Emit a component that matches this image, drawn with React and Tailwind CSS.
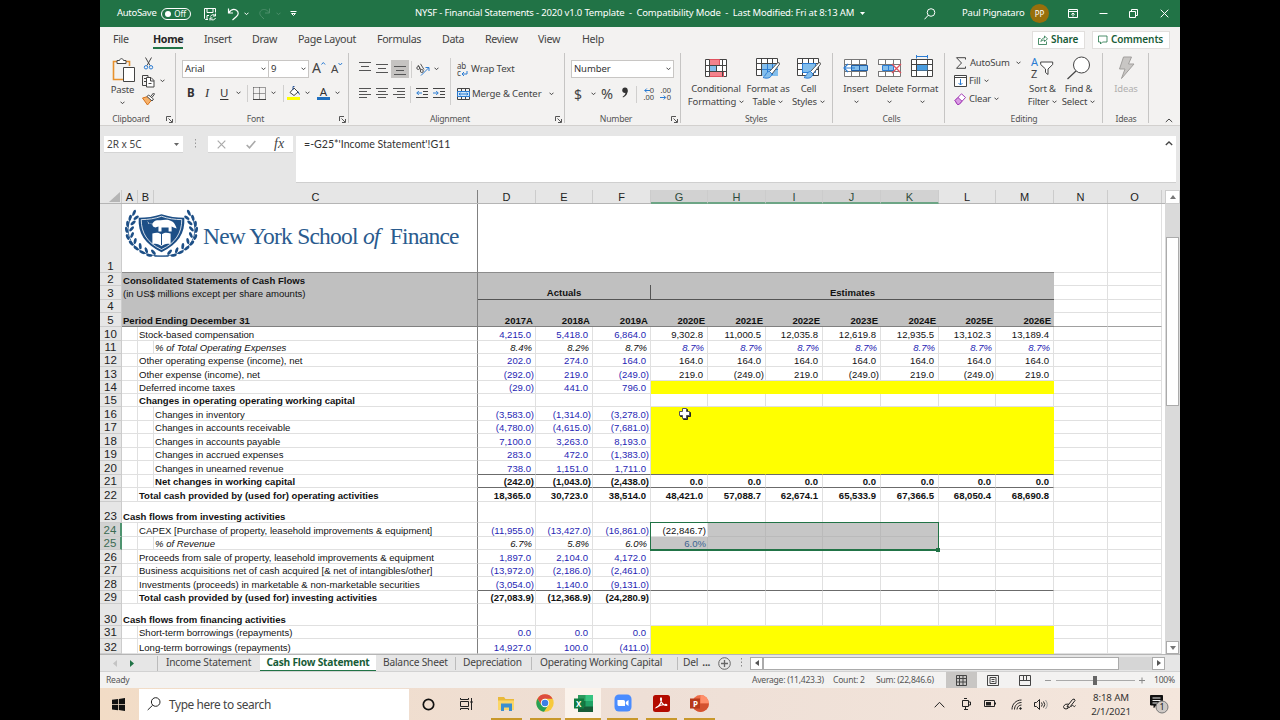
import { clsx } from "clsx";

// column widths, D to M
const yearCols = [
    { id: "D", w: "w-[58px]", year: "2017A" },
    { id: "E", w: "w-[57px]", year: "2018A" },
    { id: "F", w: "w-[58px]", year: "2019A" },
    { id: "G", w: "w-[57px]", year: "2020E" },
    { id: "H", w: "w-[58px]", year: "2021E" },
    { id: "I", w: "w-[57px]", year: "2022E" },
    { id: "J", w: "w-[58px]", year: "2023E" },
    { id: "K", w: "w-[58px]", year: "2024E" },
    { id: "L", w: "w-[57px]", year: "2025E" },
    { id: "M", w: "w-[58px]", year: "2026E" },
];

const rows = [
    { n: 10, h: "h-[14px]", indent: 1, label: "Stock-based compensation", hist: ["4,215.0", "5,418.0", "6,864.0"], est: ["9,302.8", "11,000.5", "12,035.8", "12,619.8", "12,935.5", "13,102.3", "13,189.4"] },
    { n: 11, h: "h-[13px]", indent: 2, label: "% of Total Operating Expenses", italic: true, hist: ["8.4%", "8.2%", "8.7%"], est: ["8.7%", "8.7%", "8.7%", "8.7%", "8.7%", "8.7%", "8.7%"] },
    { n: 12, h: "h-[13px]", indent: 1, label: "Other operating expense (income), net", hist: ["202.0", "274.0", "164.0"], est: ["164.0", "164.0", "164.0", "164.0", "164.0", "164.0", "164.0"] },
    { n: 13, h: "h-[14px]", indent: 1, label: "Other expense (income), net", hist: ["(292.0)", "219.0", "(249.0)"], est: ["219.0", "(249.0)", "219.0", "(249.0)", "219.0", "(249.0)", "219.0"] },
    { n: 14, h: "h-[13px]", indent: 1, label: "Deferred income taxes", hist: ["(29.0)", "441.0", "796.0"], yellow: true },
    { n: 15, h: "h-[13px]", indent: 1, label: "Changes in operating operating working capital", bold: true },
    { n: 16, h: "h-[14px]", indent: 2, label: "Changes in inventory", hist: ["(3,583.0)", "(1,314.0)", "(3,278.0)"], yellow: true },
    { n: 17, h: "h-[13px]", indent: 2, label: "Changes in accounts receivable", hist: ["(4,780.0)", "(4,615.0)", "(7,681.0)"], yellow: true },
    { n: 18, h: "h-[14px]", indent: 2, label: "Changes in accounts payable", hist: ["7,100.0", "3,263.0", "8,193.0"], yellow: true },
    { n: 19, h: "h-[13px]", indent: 2, label: "Changes in accrued expenses", hist: ["283.0", "472.0", "(1,383.0)"], yellow: true },
    { n: 20, h: "h-[14px]", indent: 2, label: "Changes in unearned revenue", hist: ["738.0", "1,151.0", "1,711.0"], yellow: true, line: true },
    { n: 21, h: "h-[13px]", indent: 2, label: "Net changes in working capital", bold: true, line: true, hist: ["(242.0)", "(1,043.0)", "(2,438.0)"], est: ["0.0", "0.0", "0.0", "0.0", "0.0", "0.0", "0.0"] },
    { n: 22, h: "h-[14px]", indent: 1, label: "Total cash provided by (used for) operating activities", bold: true, hist: ["18,365.0", "30,723.0", "38,514.0"], est: ["48,421.0", "57,088.7", "62,674.1", "65,533.9", "67,366.5", "68,050.4", "68,690.8"] },
    { n: 23, h: "h-[21px]", indent: 0, label: "Cash flows from investing activities", bold: true },
    { n: 24, h: "h-[14px]", indent: 1, label: "CAPEX [Purchase of property, leasehold improvements & equipment]", hist: ["(11,955.0)", "(13,427.0)", "(16,861.0)"], est: ["(22,846.7)"], selected: true },
    { n: 25, h: "h-[13px]", indent: 2, label: "% of Revenue", italic: true, hist: ["6.7%", "5.8%", "6.0%"], est: ["6.0%"], selected: true },
    { n: 26, h: "h-[14px]", indent: 1, label: "Proceeds from sale of property, leasehold improvements & equipment", hist: ["1,897.0", "2,104.0", "4,172.0"] },
    { n: 27, h: "h-[13px]", indent: 1, label: "Business acquisitions net of cash acquired [& net of intangibles/other]", hist: ["(13,972.0)", "(2,186.0)", "(2,461.0)"] },
    { n: 28, h: "h-[14px]", indent: 1, label: "Investments (proceeds) in marketable & non-marketable securities", hist: ["(3,054.0)", "1,140.0", "(9,131.0)"], line: true },
    { n: 29, h: "h-[13px]", indent: 1, label: "Total cash provided by (used for) investing activities", bold: true, hist: ["(27,083.9)", "(12,368.9)", "(24,280.9)"] },
    { n: 30, h: "h-[22px]", indent: 0, label: "Cash flows from financing activities", bold: true },
    { n: 31, h: "h-[13px]", indent: 1, label: "Short-term borrowings (repayments)", hist: ["0.0", "0.0", "0.0"], yellow: true },
    { n: 32, h: "h-[15px]", indent: 1, label: "Long-term borrowings (repayments)", hist: ["14,927.0", "100.0", "(411.0)"], yellow: true },
];

const tabs = [
    { name: "File", w: "w-[40px]" },
    { name: "Home", w: "w-[51px]" },
    { name: "Insert", w: "w-[48px]" },
    { name: "Draw", w: "w-[46px]" },
    { name: "Page Layout", w: "w-[79px]" },
    { name: "Formulas", w: "w-[65px]" },
    { name: "Data", w: "w-[43px]" },
    { name: "Review", w: "w-[53px]" },
    { name: "View", w: "w-[44px]" },
    { name: "Help", w: "w-[40px]" },
];

function Svg({ w, h, className, children, stroke = "#444" }) {
    return (
        <svg
            width={w}
            height={h}
            viewBox={`0 0 ${w} ${h}`}
            fill="none"
            stroke={stroke}
            strokeWidth="1"
            className={clsx("shrink-0", className)}
        >
            {children}
        </svg>
    );
}

function Chevron({ className, stroke = "#444" }) {
    return (
        <Svg w={5} h={4} className={className} stroke={stroke}>
            <path d="M.5 .7l2 2 2-2" />
        </Svg>
    );
}

function Divider({ className }) {
    return <div className={clsx("w-px shrink-0", className)} />;
}

function Lines({ rows, className }) {
    return (
        <Svg w={12} h={12} className={className} stroke="#555">
            {rows.map(([x1, x2, y]) => (
                <path key={y} d={`M${x1} ${y}H${x2}`} />
            ))}
        </Svg>
    );
}

/* ---------- title bar ---------- */

function TitleBar() {
    return (
        <div className="flex h-[27px] shrink-0 items-center bg-[#217346] text-[9.5px] whitespace-nowrap text-white">
            <div className="ml-[17px] w-[44px] tracking-[-0.3px]">AutoSave</div>
            <div className="flex h-[12px] w-[30px] items-center justify-between rounded-full border border-white pr-[4px] pl-[3px] text-[8px]">
                <span className="size-[6px] rounded-full bg-white" />
                <span>Off</span>
            </div>
            <Svg w={14} h={14} className="ml-[12px]" stroke="#fff">
                <path d="M5 12.5H2.500l-1-1v-10h11v4M4 1.500v4h6v-4M4 12V8.500h2" />
                <path d="M12.500 6.500v2.500h-2.500M7 13.500V11h2.500M7.500 9.500a3 3 0 0 1 5-.8M12.500 11a3 3 0 0 1-5 1" />
            </Svg>
            <Svg w={13} h={14} className="ml-[10px]" stroke="#fff">
                <path d="M1.500 1.500v4.500h4.500M1.700 5.800C4 2.500 7 1.700 9.500 3.200c2.500 1.800 2 4.500 0 6.300L5.500 13" strokeWidth="1.200" />
            </Svg>
            <Chevron className="ml-[4px]" stroke="#fff" />
            <Svg w={13} h={14} className="ml-[9px]" stroke="#4d8f6b">
                <path d="M11.500 1.500v4.500H7M11.300 5.800C9 2.500 6 1.700 3.500 3.200 1 5 1.500 7.700 3.500 9.500L6 12" />
            </Svg>
            <Chevron className="ml-[5px]" stroke="#4d8f6b" />
            <Svg w={7} h={6} className="ml-[9px]" stroke="#fff">
                <path d="M.5 .5h6M1.500 2.500h4l-2 2z" />
            </Svg>
            <div className="ml-[118px] w-[444px] whitespace-pre tracking-[-0.17px]">
                NYSF - Financial Statements - 2020 v1.0 Template{"  -  "}Compatibility Mode{"  -  "}Last Modified: Fri at 8:13 AM
            </div>
            <Svg w={5} h={3} className="ml-[1px]" stroke="none">
                <path d="M0 0h5L2.500 3z" fill="#fff" />
            </Svg>
            <Svg w={12} h={12} className="ml-[59px]" stroke="#fff">
                <circle cx="7" cy="4.500" r="3.800" />
                <path d="M4.300 7.200L.5 11.300" />
            </Svg>
            <div className="ml-[26px] w-[62px] tracking-[-0.200px]">Paul Pignataro</div>
            <div className="ml-[6px] flex size-[19px] items-center justify-center rounded-full bg-[#986f0b] text-[8px]">PP</div>
            <Svg w={10} h={9} className="ml-[19px]" stroke="#fff">
                <path d="M.5 .5h9v8h-9zM.5 2.500h9M5 7.500v-3.500M3.300 5.500L5 4l1.700 1.500" />
            </Svg>
            <Svg w={9} h={9} className="ml-[21px]" stroke="#fff">
                <path d="M.5 4.500h8" />
            </Svg>
            <Svg w={9} h={9} className="ml-[21px]" stroke="#fff">
                <path d="M.5 2.500h6v6h-6zM2.500 2.500v-2h6v6h-2" />
            </Svg>
            <Svg w={9} h={9} className="ml-[22px]" stroke="#fff">
                <path d="M.7 .7l7.600 7.600M8.300 .7L.7 8.300" />
            </Svg>
        </div>
    );
}

function TabStrip() {
    return (
        <div className="flex h-[25px] shrink-0 items-center pl-[13px] text-[10.700px] tracking-[-0.350px] text-[#444]">
            {tabs.map((tab) => (
                <div key={tab.name} className={clsx("flex h-full flex-col items-start pt-[4px]", tab.w)}>
                    <span
                        className={clsx(
                            "h-[18px] leading-[16px] whitespace-nowrap",
                            tab.name === "Home" && "border-b-2 border-[#217346] font-bold text-[#262626]"
                        )}
                    >
                        {tab.name}
                    </span>
                </div>
            ))}
            <div className="ml-[410px] flex h-[18px] w-[53px] items-center border border-[#e1dfdd] bg-white pl-[5px] text-[10px] font-semibold text-[#185c37]">
                <Svg w={10} h={10} stroke="#217346">
                    <path d="M2.500 3.500h-2v6h8v-3M3 6.500c.3-2.500 2-3.500 3.500-3.500V1l3 2.800-3 2.700V5C5 5 4 5.300 3 6.500z" strokeWidth=".8" />
                </Svg>
                <span className="ml-[3px] tracking-[-0.100px]">Share</span>
            </div>
            <div className="ml-[7px] flex h-[18px] w-[78px] items-center border border-[#e1dfdd] bg-white pl-[5px] text-[10px] font-semibold text-[#185c37]">
                <Svg w={10} h={10} stroke="#217346">
                    <path d="M.5 1h8.500v6H4.500L2.500 9V7h-2z" strokeWidth=".8" />
                </Svg>
                <span className="ml-[3px] tracking-[-0.100px]">Comments</span>
            </div>
        </div>
    );
}

/* ---------- ribbon ---------- */

function Group({ label, className, launcher, children }) {
    return (
        <div className={clsx("relative flex h-[74px] shrink-0 flex-col", className)}>
            <div className="flex h-[61px]">{children}</div>
            <div className="flex h-[13px] items-center justify-center text-[8.700px] tracking-[-0.250px] text-[#555]">
                {label}
            </div>
            <Divider className="absolute top-[1px] right-0 h-[70px] bg-[#c6c5c4]" />
            {launcher && (
                <Svg w={7} h={7} className="absolute right-[3px] bottom-[3px]" stroke="#555">
                    <path d="M.5 5V.5H5M2.500 2.500l3.500 3.500M6.500 3v3.500H3" />
                </Svg>
            )}
        </div>
    );
}

function BigButton({ icon, lines, chevron = "inline", className, disabled }) {
    return (
        <div
            className={clsx(
                "flex shrink-0 flex-col items-center text-[9.500px] leading-[12.500px] tracking-[-0.150px] whitespace-nowrap",
                disabled ? "text-[#b1b0af]" : "text-[#444]",
                className
            )}
        >
            <div className="flex h-[31px] items-center justify-center">{icon}</div>
            <div>{lines[0]}</div>
            {lines[1] && (
                <div className="flex items-center gap-[3px]">
                    {lines[1]}
                    <Chevron />
                </div>
            )}
            {chevron === "below" && <Chevron className="mt-[4px]" />}
        </div>
    );
}

function TableGrid({ children }) {
    return (
        <Svg w={24} h={24}>
            <path d="M.5 2.500h21v17h-21z" fill="#fff" />
            <path d="M.5 7.500h21M.5 13.500h21M5.500 2.500v17M11.500 2.500v17M16.500 2.500v17" />
            {children}
        </Svg>
    );
}

function Brush() {
    return (
        <>
            <path d="M22 6.500L13.500 15.500l2.500 2.500 8-10.500z" fill="#fff" strokeWidth=".9" />
            <path d="M13.500 15.500c-3.500 0-3 3.500-6.500 6 4.500 1.500 8 .5 9-3.500z" fill="#83beec" stroke="#2b7cd3" />
        </>
    );
}

function Combo({ className, children }) {
    return (
        <div className={clsx("flex h-[18px] items-center justify-between border border-[#c8c6c4] bg-white pr-[2px] pl-[2px] text-[9.500px] tracking-[-0.100px] text-[#333]", className)}>
            <span>{children}</span>
            <Chevron />
        </div>
    );
}

function ClipboardGroup() {
    return (
        <Group label="Clipboard" launcher className="w-[76px] pr-[14px]">
            <BigButton
                className="w-[45px] shrink-0 pt-[1px]"
                chevron="below"
                lines={["Paste"]}
                icon={
                    <Svg w={24} h={26} className="mt-[2px] ml-[3px]">
                        <path d="M5 4.500H1.500v18H11M14 4.500h3.500V9" stroke="#e8912d" strokeWidth="1.600" />
                        <path d="M5 6.500v-3h2.500c.5-2.500 3.500-2.500 4 0H14v3z" fill="#fff" />
                        <path d="M11.500 10.500h11v14h-11z" fill="#fff" />
                    </Svg>
                }
            />
            <div className="-ml-[4px] flex w-[31px] shrink-0 flex-col pt-[5px]">
                <Svg w={14} h={13} className="ml-px">
                    <path d="M3.500 .5l4.500 8M9.500 .5l-4.500 8" />
                    <circle cx="4" cy="10.300" r="1.700" stroke="#2b7cd3" />
                    <circle cx="9" cy="10.300" r="1.700" stroke="#2b7cd3" />
                </Svg>
                <div className="mt-[4px] flex items-center">
                    <Svg w={14} h={14}>
                        <path d="M5 11.500H1.500v-10H7v2M3 4.500h2M3 7.500h2" />
                        <path d="M5.500 3.500H10l3 3v6.500H5.500zM9.500 3.500v3.500h3.500M7.500 9.500h3" fill="#fff" />
                    </Svg>
                    <Chevron className="ml-[5px]" />
                </div>
                <Svg w={14} h={14} className="mt-[4px]">
                    <path d="M1.500 6L7 4.500l4 3-4.500 5.500z" fill="#f6b26b" stroke="#d9731a" />
                    <path d="M6 4.500l5 4.500 1.500-2-5-4zM10 4l2.500-3 1 1-2.200 3" fill="#fff" />
                </Svg>
            </div>
        </Group>
    );
}

function FontGroup() {
    return (
        <Group label="Font" launcher className="w-[173px] pr-[14px]">
            <div className="flex flex-col pt-[8px] pl-[6px]">
                <div className="flex items-center">
                    <Combo className="w-[87px]">Arial</Combo>
                    <Combo className="-ml-px w-[41px]">9</Combo>
                    <div className="ml-[3px] flex w-[14px] pb-[3px] text-[14px] leading-[14px] text-[#444]">
                        A<Svg w={5} h={5} stroke="#2b7cd3"><path d="M.5 3.500l1.800-2 1.800 2" /></Svg>
                    </div>
                    <div className="ml-[5px] flex w-[14px] pb-px text-[11.500px] leading-[14px] text-[#444]">
                        A<Svg w={5} h={5} stroke="#2b7cd3"><path d="M.5 1l1.800 2 1.800-2" /></Svg>
                    </div>
                </div>
                <div className="mt-[6px] flex h-[18px] items-center text-[11.500px] text-[#333]">
                    <span className="ml-[5px] w-[17px] font-bold">B</span>
                    <span className="w-[16px] pl-[1px] font-['Liberation_Serif',serif] text-[12.500px] italic">I</span>
                    <span className="w-[16px] underline underline-offset-2">U</span>
                    <Chevron />
                    <Divider className="ml-[6px] h-[17px] bg-[#d0cfce]" />
                    <Svg w={13} h={13} className="ml-[5px]">
                        <path d="M.5 .5h12v12M.5 .5v12M6.500 .5v12M.5 6.500h12" strokeDasharray="1 1" />
                        <path d="M0 12.500h13" />
                    </Svg>
                    <Chevron className="ml-[5px]" />
                    <Divider className="ml-[7px] h-[17px] bg-[#d0cfce]" />
                    <Svg w={14} h={14} className="ml-[3px]">
                        <path d="M3 6.500L7 2l4 4-4 3.500z" fill="#fff" />
                        <path d="M6 4V.5h1.500M11 5.500l1.500 3" stroke="#2b579a" />
                        <path d="M0 11h13v3H0z" fill="#ff0" stroke="none" />
                    </Svg>
                    <Chevron className="ml-[4px]" />
                    <div className="ml-[7px] flex h-[14px] w-[13px] flex-col items-center border-b-[3px] border-[#1f6fbf] text-[11.500px] leading-[11px]">A</div>
                    <Chevron className="ml-[5px]" />
                </div>
            </div>
        </Group>
    );
}

function AlignmentGroup() {
    return (
        <Group label="Alignment" launcher className="w-[216px] pr-[14px]">
            <div className="flex w-[101px] shrink-0 flex-col pt-[8px] pl-[10px]">
                <div className="flex h-[18px] items-center">
                    <Lines rows={[[0, 12, 1.5], [2, 10, 5.5], [0, 12, 9.5]]} className="-mt-[5px]" />
                    <Lines rows={[[0, 12, 1.5], [2, 10, 5.5], [0, 12, 9.5]]} className="ml-[5px]" />
                    <div className="ml-[3px] flex h-[18px] w-[18px] items-center justify-center bg-[#c5c3c1]">
                        <Lines rows={[[0, 12, 3.5], [2, 10, 7.5], [0, 12, 11.5]]} />
                    </div>
                    <Divider className="ml-[2px] h-[17px] bg-[#d0cfce]" />
                    <Svg w={14} h={13} className="ml-[4px]">
                        <circle cx="2.300" cy="5" r="1.500" strokeWidth=".9" />
                        <circle cx="5.800" cy="8" r="1.500" strokeWidth=".9" />
                        <path d="M2 2l3 5M4.500 .8L8 6.500" strokeWidth=".9" />
                        <path d="M5 12.500L12.500 5M9.500 4.500h3.500V8" stroke="#2b7cd3" />
                    </Svg>
                    <Chevron className="ml-[4px]" />
                </div>
                <div className="mt-[7px] flex h-[18px] items-center">
                    <Lines rows={[[0, 12, 0.5], [0, 8, 3.5], [0, 12, 6.5], [0, 8, 9.5]]} />
                    <Lines rows={[[0, 12, 0.5], [2, 10, 3.5], [0, 12, 6.5], [2, 10, 9.5]]} className="ml-[5px]" />
                    <Lines rows={[[0, 12, 0.5], [4, 12, 3.5], [0, 12, 6.5], [4, 12, 9.5]]} className="ml-[5px]" />
                    <Divider className="ml-[5px] h-[17px] bg-[#d0cfce]" />
                    <Svg w={12} h={12} className="ml-[5px]">
                        <path d="M0 .5h12M7 3.500h5M7 6.500h5M0 9.500h12" />
                        <path d="M6 5H.8M2.800 3L.8 5l2 2" stroke="#2b7cd3" />
                    </Svg>
                    <Svg w={12} h={12} className="ml-[5px]">
                        <path d="M0 .5h12M7 3.500h5M7 6.500h5M0 9.500h12" />
                        <path d="M0 5h5.200M3.200 3l2 2-2 2" stroke="#2b7cd3" />
                    </Svg>
                </div>
            </div>
            <Divider className="mt-[6px] h-[47px] bg-[#d0cfce]" />
            <div className="flex w-[112px] shrink-0 flex-col pt-[8px] pl-[6px] text-[9.600px] tracking-[-0.150px] text-[#444]">
                <div className="flex h-[18px] items-center">
                    <div className="relative flex w-[14px] flex-col text-[8px] leading-[7px]">
                        <span>ab</span>
                        <span>c</span>
                        <Svg w={7} h={6} className="absolute right-[3px] bottom-[-1px]" stroke="#2b7cd3">
                            <path d="M6 0v3H1M3 1L1 3l2 2" />
                        </Svg>
                    </div>
                    <span>Wrap Text</span>
                </div>
                <div className="mt-[7px] flex h-[18px] items-center whitespace-nowrap">
                    <Svg w={13} h={12}>
                        <path d="M.5 .5h12v11H.5zM.5 3.500h12M.5 8.500h12M4.500 .5v3M8.500 .5v3M4.500 8.500v3M8.500 8.500v3" />
                        <path d="M.5 3.500h12v5H.5z" fill="#cfe5f7" stroke="#2b7cd3" />
                        <path d="M2 6h9M3.500 4.800L2 6l1.500 1.200M9.500 4.800L11 6 9.500 7.200" stroke="#2b7cd3" />
                    </Svg>
                    <span className="ml-[2px] w-[77px] pt-px">Merge &amp; Center</span>
                    <Chevron />
                </div>
            </div>
        </Group>
    );
}

function NumberGroup() {
    return (
        <Group label="Number" launcher className="w-[116px] pr-[14px]">
            <div className="flex flex-col pt-[8px] pl-[6px]">
                <Combo className="w-[103px]">Number</Combo>
                <div className="mt-[7px] flex h-[18px] items-center text-[14px] text-[#444]">
                    <span className="ml-[3px] w-[17px]">$</span>
                    <Chevron />
                    <span className="ml-[5px] w-[19px] text-[14.500px]">%</span>
                    <Svg w={8} h={11} className="-mt-[3px] ml-[1px]" stroke="none">
                        <circle cx="4" cy="3.200" r="2.700" fill="#333" />
                        <path d="M6.700 3.200c.2 3.300-1.700 6-4.700 7.300l-.4-.8C3.500 8.500 4.600 7 4.500 5z" fill="#333" />
                    </Svg>
                    <Divider className="ml-[7px] h-[17px] bg-[#d0cfce]" />
                    <div className="ml-[4px] flex w-[13px] flex-col items-end text-[7.500px] leading-[7.500px]">
                        <span className="flex items-center">
                            <Svg w={6} h={5} stroke="#2b7cd3"><path d="M6 2.500H.8M2.800 .5l-2 2 2 2" /></Svg>0
                        </span>
                        <span>.00</span>
                    </div>
                    <div className="ml-[5px] flex w-[12px] flex-col items-end text-[7.500px] leading-[7.500px]">
                        <span>.00</span>
                        <span className="flex items-center">
                            <Svg w={7} h={5} stroke="#2b7cd3"><path d="M0 2.500h5.500M3.700 .5l2 2-2 2" /></Svg>0
                        </span>
                    </div>
                </div>
            </div>
        </Group>
    );
}

function StylesGroup() {
    return (
        <Group label="Styles" className="w-[152px] pr-[8px] pl-[6px]">
            <BigButton
                className="w-[58px]"
                lines={["Conditional", "Formatting"]}
                icon={
                    <Svg w={23} h={19} className="mt-[1px]">
                        <path d="M.5 .5h21v17H.5z" fill="#fff" />
                        <path d="M4.500 .5h10v6h-10zM4.500 12.500h14v5h-14z" fill="#f4828c" stroke="#e0525f" />
                        <path d="M4.500 6.500h7v6h-7z" fill="#83beec" stroke="none" />
                        <path d="M.5 6.500h21M.5 12.500h21M4.500 .5v17M11.500 6v6M17.500 .5v17" />
                    </Svg>
                }
            />
            <BigButton
                className="w-[46px]"
                lines={["Format as", "Table"]}
                icon={
                    <TableGrid>
                        <path d="M6 8h16v12H6z" fill="#83beec" stroke="none" />
                        <path d="M11.500 8v11M16.500 8v11M6 13.500h16" stroke="#2b7cd3" />
                        <Brush />
                    </TableGrid>
                }
            />
            <BigButton
                className="w-[35px]"
                lines={["Cell", "Styles"]}
                icon={
                    <TableGrid>
                        <path d="M5.500 7.500h13v9h-13z" fill="#83beec" stroke="#2b7cd3" />
                        <Brush />
                    </TableGrid>
                }
            />
        </Group>
    );
}

function CellsGroup() {
    return (
        <Group label="Cells" className="w-[112px] pr-px pl-[6px]">
            <BigButton
                className="w-[34px]"
                chevron="below"
                lines={["Insert"]}
                icon={
                    <Svg w={26} h={19} className="mt-[1px]">
                        <path d="M1.500 .5h22v17h-22zM1.500 5.500h22M1.500 12.500h22M8.500 .5v17M16.500 .5v17" fill="#fff" stroke="#777" />
                        <path d="M8.500 6.500h16v5h-16zM16.500 6.500v5" fill="#83beec" stroke="#1f5fa8" />
                        <path d="M12 9H1M5 5L1 9l4 4" stroke="#2b7cd3" strokeWidth="1.200" />
                    </Svg>
                }
            />
            <BigButton
                className="w-[33px]"
                chevron="below"
                lines={["Delete"]}
                icon={
                    <Svg w={25} h={19} className="mt-[1px]">
                        <path d="M1.500 .5h22v17h-22zM1.500 5.500h22M1.500 12.500h22M8.500 .5v17M16.500 .5v17" fill="#fff" stroke="#777" />
                        <path d="M0 6h6v6H0z" fill="#f3f2f1" stroke="none" />
                        <path d="M5.500 6.500h11v5h-11zM11.500 6.500v5" fill="#83beec" stroke="#2b7cd3" />
                        <path d="M15 5l9 9M24 5l-9 9" stroke="#e0525f" strokeWidth="1.300" />
                    </Svg>
                }
            />
            <BigButton
                className="w-[33px]"
                chevron="below"
                lines={["Format"]}
                icon={
                    <Svg w={23} h={23} className="-mt-[2px]">
                        <path d="M5.500 1.500h11M5.500 0v3.500M16.500 0v3.500" stroke="#2b7cd3" />
                        <path d="M.5 4.500h21v17H.5z" fill="#fff" />
                        <path d="M.5 9.500h21M.5 15.500h21M5.500 4.500v17M16.500 4.500v17" />
                        <path d="M6 10h10.500v5.500H6z" fill="#4a9de0" stroke="none" />
                    </Svg>
                }
            />
        </Group>
    );
}

function EditingGroup() {
    return (
        <Group label="Editing" className="w-[158px]">
            <div className="flex w-[76px] shrink-0 flex-col pt-[2px] pl-[9px] text-[9.500px] tracking-[-0.200px] text-[#444]">
                <div className="flex h-[18px] items-center">
                    <Svg w={13} h={12}>
                        <path d="M11.500 2.500V.7h-9L7.500 6l-5 5.300h9V9.500" />
                    </Svg>
                    <span className="ml-[3px] w-[46px]">AutoSum</span>
                    <Chevron />
                </div>
                <div className="flex h-[18px] items-center">
                    <Svg w={13} h={12}>
                        <path d="M.5 .5h12v11H.5zM.5 2.500h12" fill="#fff" />
                        <path d="M6.500 4v6M4.500 8l2 2 2-2" stroke="#2b7cd3" />
                    </Svg>
                    <span className="ml-[2px] w-[15px]">Fill</span>
                    <Chevron />
                </div>
                <div className="flex h-[18px] items-center">
                    <Svg w={13} h={12} stroke="#a23bb5">
                        <path d="M1 7.500L7.500 .8l4 3.700-6.500 7H3.500z" fill="#fff" />
                        <path d="M1 7.500L4 4.500l4 3.700-3 3.300H3.500z" fill="#d99be3" />
                    </Svg>
                    <span className="ml-[2px] w-[25px]">Clear</span>
                    <Chevron />
                </div>
            </div>
            <BigButton
                className="ml-[2px] w-[39px]"
                lines={["Sort &", "Filter"]}
                icon={
                    <div className="flex items-center">
                        <div className="flex flex-col text-[11px] leading-[12px]">
                            <span className="text-[#2b7cd3]">A</span>
                            <span>Z</span>
                        </div>
                        <Svg w={14} h={15} className="mt-[2px] ml-[2px]">
                            <path d="M.7 1h12v2.500L8 8v5.500L5.500 11.500V8L.7 3.500z" fill="#fff" />
                        </Svg>
                    </div>
                }
            />
            <BigButton
                className="w-[33px]"
                lines={["Find &", "Select"]}
                icon={
                    <Svg w={24} h={24} className="mt-[1px]">
                        <circle cx="14.500" cy="9" r="8" fill="#fff" />
                        <path d="M9 15L.5 23" strokeWidth="1.200" />
                    </Svg>
                }
            />
        </Group>
    );
}

function Ribbon() {
    return (
        <div className="flex h-[74px] shrink-0 border-b border-[#d2d0ce]">
            <ClipboardGroup />
            <FontGroup />
            <AlignmentGroup />
            <NumberGroup />
            <StylesGroup />
            <CellsGroup />
            <EditingGroup />
            <Group label="Ideas" className="w-[46px]">
                <BigButton
                    className="w-[46px]"
                    disabled
                    lines={["Ideas"]}
                    icon={
                        <Svg w={17} h={24} stroke="#a19f9d">
                            <path d="M5.500 1h8L10.500 8H16L3.500 22.500 7 13H1.500z" fill="#c8c6c4" />
                        </Svg>
                    }
                />
            </Group>
            <div className="flex flex-1 items-end pb-[2px] pl-[16px]">
                <Svg w={8} h={5}>
                    <path d="M.8 4l3.200-3 3.200 3" />
                </Svg>
            </div>
        </div>
    );
}

function FormulaBar() {
    return (
        <div className="flex h-[64px] shrink-0 bg-[#e6e6e6] pt-[10px] pl-[4px] text-[10px] text-[#444]">
            <div className="flex h-[17px] w-[79px] items-center justify-between border-b border-[#d4d4d4] bg-white pr-[4px] pl-[3px]">
                <span>2R x 5C</span>
                <Svg w={5} h={3} stroke="none">
                    <path d="M0 0h5L2.500 3z" fill="#666" />
                </Svg>
            </div>
            <Svg w={3} h={10} className="mt-[3px] ml-[11px]" stroke="#999">
                <path d="M1.500 0v10" strokeDasharray="1.500 2" />
            </Svg>
            <div className="ml-[11px] flex h-[17px] w-[85px] items-center border-b border-[#d4d4d4] bg-white">
                <Svg w={9} h={9} className="ml-[9px]" stroke="#aaa">
                    <path d="M.7 .7l7.600 7.600M8.300 .7L.7 8.300" strokeWidth="1.200" />
                </Svg>
                <Svg w={10} h={9} className="ml-[20px]" stroke="#aaa">
                    <path d="M.7 5l2.800 2.800L9.300 1" strokeWidth="1.600" />
                </Svg>
                <span className="ml-[18px] font-['Liberation_Serif',serif] text-[14px] leading-[14px] text-[#444] italic">fx</span>
            </div>
            <div className="ml-[3px] flex h-[47px] w-[880px] items-start justify-between border-b border-[#cfcfcf] bg-white pr-[3px] pl-[8px]">
                <span className="font-[Lato,sans-serif] text-[10.600px] leading-[17px] text-[#333]">=-G25*&#39;Income Statement&#39;!G11</span>
                <Svg w={8} h={5} className="mt-[5px]">
                    <path d="M.8 4l3.200-3 3.200 3" strokeWidth="1.300" />
                </Svg>
            </div>
        </div>
    );
}

/* ---------- sheet ---------- */

function ColumnHeader() {
    return (
        <div className="flex h-[14px] border-b border-[#b5b5b5] bg-[#e6e6e6] text-center text-[11px] leading-[14px] text-[#222]">
            <div className="flex w-[22px] items-end justify-end border-r border-[#ccc] pr-[1px] pb-[1px]">
                <Svg w={11} h={10} stroke="none">
                    <path d="M11 0v10H0z" fill="#b5b5b5" />
                </Svg>
            </div>
            <div className="w-[16px] border-r border-[#ccc]">A</div>
            <div className="w-[16px] border-r border-[#ccc]">B</div>
            <div className="w-[324px] border-r border-[#808080]">C</div>
            {yearCols.map((col) => (
                <div
                    key={col.id}
                    className={clsx(
                        "border-r border-[#ccc]",
                        col.w,
                        "GHIJK".includes(col.id) && "h-[14px] border-b-2 border-b-[#6da585] bg-[#d2d2d2] text-[#2e4a3b]"
                    )}
                >
                    {col.id}
                </div>
            ))}
            <div className="w-[54px] border-r border-[#ccc]">N</div>
            <div className="w-[54px] border-r border-[#ccc]">O</div>
        </div>
    );
}

function RowNumber({ n, selected }) {
    return (
        <div
            className={clsx(
                "flex w-[22px] shrink-0 items-end justify-center border-r border-b border-b-[#ccc] text-[11.500px] leading-[11px]",
                selected ? "border-r-2 border-r-[#4f9470] bg-[#d2d2d2] text-[#3b6b52]" : "border-r-[#ccc] bg-[#e6e6e6] text-[#222]"
            )}
        >
            {n}
        </div>
    );
}

function Logo() {
    return (
        <div className="flex items-center pt-[4px] pl-[2px] font-['Liberation_Serif',serif] text-[23.500px] leading-[30px] text-[#2a5b8e]">
            <svg width="75" height="52" viewBox="0 0 74 50" fill="none" className="shrink-0">
                <g stroke="#1d4f86" strokeWidth=".9">
                    <path d="M10 4C2 14 1 30 14 40c6 5 14 7 30 7M64 4c8 10 9 26-4 36-6 5-14 7-30 7" />
                </g>
                <g fill="#1d4f86">
                    {[
                        [10, 4, 25], [6, 9, 12], [3.5, 15, 0], [2.500, 21, -10], [3.5, 28, -22], [7, 34, -38], [12, 39, -52], [18, 43, -65], [25, 46, -80],
                        [12, 9, 55], [9, 14, 48], [7.500, 20, 40], [8, 26, 25], [11, 32, 10], [16, 37, -5], [22, 41, -20], [29, 43, -40],
                    ].map(([x, y, r]) => (
                        <g key={`${x}-${y}`}>
                            <ellipse cx={x} cy={y} rx="1.400" ry="3.100" transform={`rotate(${r} ${x} ${y})`} />
                            <ellipse cx={74 - x} cy={y} rx="1.400" ry="3.100" transform={`rotate(${-r} ${74 - x} ${y})`} />
                        </g>
                    ))}
                    <path d="M14.500 9c8 0 15-1 22.500-3.500C44.500 8 51.500 9 59.500 9c1 15-6 26-22.500 34C20.500 35 13.500 24 14.500 9z" />
                </g>
                <path d="M17 10.800c7 0 13.500-1 20-3.300 6.500 2.300 13 3.300 20 3.300 0 13-6 23-20 29.500-14-6.500-20-16.500-20-29.500z" stroke="#fff" strokeWidth=".8" />
                <path d="M23 12l2 3h3c2-4 5-3.500 8-3.500 4-1 9-1 12 1.500 2 1.500 3 4 4 6.500l-3-1-2-1v5h-3v-4h-7v4h-3v-5l-3 1c-2 0-3-1-3-3l-4-.5z" fill="#fff" />
                <path d="M28 24.500c4-1 6.500-1 9 1 2.500-2 5-2 9-1V35c-4-1-6.500 0-9 2-2.500-2-5-3-9-2z" fill="#fff" />
                <path d="M37 25v11" stroke="#1d4f86" />
            </svg>
            <span className="mt-[3px] ml-[4px] w-[268px] tracking-[-0.780px] whitespace-nowrap">
                New York School <i>of</i>&nbsp; Finance
            </span>
        </div>
    );
}

const grid = "border-r border-b border-r-[#e0e0e0] border-b-[#e0e0e0]";

function LabelCells({ row }) {
    return (
        <>
            {row.indent > 0 && <div className={clsx("w-[16px] shrink-0", grid)} />}
            {row.indent > 1 && <div className={clsx("w-[16px] shrink-0", grid)} />}
            <div
                className={clsx(
                    "flex shrink-0 items-end border-r border-b border-r-[#808080] border-b-[#e0e0e0] pl-px whitespace-nowrap",
                    row.indent === 0 && "w-[356px]",
                    row.indent === 1 && "w-[340px]",
                    row.indent === 2 && "w-[324px]",
                    row.bold && "font-bold",
                    row.italic && "italic"
                )}
            >
                {row.label}
            </div>
        </>
    );
}

function valuePadding(value, picked) {
    if (!value) return "";
    if (value.endsWith("%")) return picked ? "pr-[1px]" : "pr-[3px]";
    return value.endsWith(")") ? "pr-[1px]" : "pr-[4px]";
}

function ValueCell({ row, index }) {
    const col = yearCols[index];
    const hist = index < 3;
    const value = hist ? row.hist?.[index] : row.est?.[index - 3];
    const yellow = !hist && row.yellow;
    const picked = row.selected && index >= 3 && index <= 7;
    const shaded = picked && !(row.n === 24 && index === 3);
    const percent = value?.endsWith("%");
    const blue = !row.bold && (percent ? !hist : hist);

    return (
        <div
            className={clsx(
                "flex shrink-0 items-end justify-end border-r border-b",
                col.w,
                shaded && "border-r-[#bababa] border-b-[#bababa] bg-[#c6c6c6]",
                yellow && "border-r-[#ff0] bg-[#ff0]",
                !shaded && !yellow && "border-r-[#e0e0e0]",
                !shaded && (row.line ? "border-b-[#6b6b6b]" : yellow ? "border-b-[#ff0]" : "border-b-[#e0e0e0]"),
                valuePadding(value, picked),
                row.bold && "font-bold",
                row.italic && !picked && "italic",
                picked && percent ? "text-[#3d6491]" : blue && "text-[#1f1fb4]"
            )}
        >
            {value}
        </div>
    );
}

function SheetHead() {
    return (
        <>
            <div className="flex h-[69px]">
                <RowNumber n={1} />
                <div className="flex w-[356px] items-start border-r border-b border-r-[#808080] border-b-[#8c8c8c]">
                    <Logo />
                </div>
                <div className="w-[576px] border-b border-[#8c8c8c]" />
                <div className={clsx("w-[54px]", grid)} />
                <div className={clsx("w-[54px]", grid)} />
            </div>
            <div className="flex h-[54px]">
                <div className="flex flex-col">
                    <div className="flex h-[13px]"><RowNumber n={2} /></div>
                    <div className="flex h-[14px]"><RowNumber n={3} /></div>
                    <div className="flex h-[13px]"><RowNumber n={4} /></div>
                    <div className="flex h-[14px]"><RowNumber n={5} /></div>
                </div>
                <div className="flex w-[356px] flex-col border-r border-b border-[#808080] bg-[#c0c0c0] pl-px leading-[13px]">
                    <div className="h-[14px] pt-[1px] font-bold">Consolidated Statements of Cash Flows</div>
                    <div className="h-[27px]">(in US$ millions except per share amounts)</div>
                    <div className="h-[12px] font-bold">Period Ending December 31</div>
                </div>
                <div className="flex w-[576px] flex-col border-b border-[#808080] bg-[#c0c0c0] font-bold">
                    <div className="flex h-[27px] items-end border-b border-[#555] text-center">
                        <div className="h-[14px] w-[173px] border-r border-[#555] leading-[16px]">Actuals</div>
                        <div className="h-[14px] w-[403px] leading-[16px]">Estimates</div>
                    </div>
                    <div className="flex flex-1 items-end">
                        {yearCols.map((col) => (
                            <div key={col.id} className={clsx("pr-[3px] text-right", col.w)}>{col.year}</div>
                        ))}
                    </div>
                </div>
                {["N", "O"].map((id) => (
                    <div key={id} className="flex w-[54px] flex-col">
                        <div className={clsx("h-[13px]", grid)} />
                        <div className={clsx("h-[14px]", grid)} />
                        <div className={clsx("h-[13px]", grid)} />
                        <div className="h-[14px] border-r border-b border-r-[#e0e0e0] border-b-[#a0a0a0]" />
                    </div>
                ))}
            </div>
        </>
    );
}

function Sheet() {
    return (
        <div className="relative h-[464px] w-[1065px] shrink-0 overflow-hidden bg-white font-['Liberation_Sans',Arial,sans-serif] text-[9.550px] leading-[11px] text-[#111]">
            <ColumnHeader />
            <SheetHead />
            {rows.map((row) => (
                <div key={row.n} className={clsx("flex", row.h)}>
                    <RowNumber n={row.n} selected={row.selected} />
                    <LabelCells row={row} />
                    {yearCols.map((col, i) => (
                        <ValueCell key={col.id} row={row} index={i} />
                    ))}
                    <div className={clsx("w-[54px]", grid)} />
                    <div className={clsx("w-[54px]", grid)} />
                </div>
            ))}
            {/* selection outline G24:K25 */}
            <div className="absolute top-[332px] left-[550px] h-[29px] w-[289px] border border-b-2 border-[#217346]">
                <span className="absolute -right-[2px] -bottom-[3px] size-[4px] bg-[#217346]" />
            </div>
            {/* cell pointer */}
            <Svg w={14} h={14} className="absolute top-[217px] left-[578px]" stroke="#222">
                <path d="M5.500 2.500h4v3h3v4h-3v3h-4v-3h-3v-4h3z" fill="#222" />
                <path d="M4.500 1.500h4v3h3v4h-3v3h-4v-3h-3v-4h3z" fill="#fff" stroke="#555" />
            </Svg>
        </div>
    );
}

function VerticalScroll() {
    return (
        <div className="flex w-[15px] flex-col items-center bg-[#dadada]">
            <div className="flex h-[14px] w-full items-center justify-center border border-[#ccc] bg-white">
                <Svg w={6} h={4} stroke="none"><path d="M3 0l3 4H0z" fill="#777" /></Svg>
            </div>
            <div className="mt-[33px] h-[169px] w-[13px] border border-[#ababab] bg-white" />
            <div className="flex-1" />
            <div className="flex h-[13px] w-[13px] items-center justify-center border border-[#ababab] bg-white">
                <Svg w={6} h={4} stroke="none"><path d="M3 4L0 0h6z" fill="#777" /></Svg>
            </div>
        </div>
    );
}

function SheetTabs() {
    return (
        <div className="flex h-[17px] shrink-0 items-center border-t border-[#b5b5b5] bg-[#e6e6e6] text-[10.200px] tracking-[-0.200px] text-[#444]">
            <Svg w={4} h={7} className="ml-[13px]" stroke="none"><path d="M4 0v7L0 3.500z" fill="#c4c4c4" /></Svg>
            <Svg w={4} h={7} className="ml-[13px]" stroke="none"><path d="M0 0v7l4-3.500z" fill="#217346" /></Svg>
            <Divider className="ml-[23px] h-[15px] bg-[#bbb]" />
            <div className="w-[102px] pl-[8px] whitespace-nowrap">Income Statement</div>
            <div className="flex h-full w-[116px] items-center justify-center border-b border-[#217346] bg-white font-bold whitespace-nowrap text-[#185c37]">
                Cash Flow Statement
            </div>
            <div className="w-[79px] pl-[7px] whitespace-nowrap">Balance Sheet</div>
            <Divider className="h-[13px] bg-[#bbb]" />
            <div className="w-[75px] pl-[7px]">Depreciation</div>
            <Divider className="h-[13px] bg-[#bbb]" />
            <div className="w-[145px] pl-[8px] whitespace-nowrap">Operating Working Capital</div>
            <Divider className="h-[13px] bg-[#bbb]" />
            <div className="flex w-[40px] gap-[4px] pl-[5px]">
                <span>Del</span>
                <b>...</b>
            </div>
            <Svg w={13} h={13} stroke="#666">
                <circle cx="6.500" cy="6.500" r="5.800" />
                <path d="M6.500 3v7M3 6.500h7" strokeWidth="1.300" />
            </Svg>
            <Svg w={3} h={10} className="ml-[9px]" stroke="#888">
                <path d="M1.500 0v10" strokeDasharray="1.500 2" />
            </Svg>
            <div className="ml-[7px] flex h-[13px] w-[415px] bg-[#d6d6d6]">
                <div className="flex w-[13px] items-center justify-center border border-[#ababab] bg-white">
                    <Svg w={4} h={6} stroke="none"><path d="M4 0v6L0 3z" fill="#555" /></Svg>
                </div>
                <div className="w-[356px] border border-[#ababab] bg-white" />
                <div className="flex-1" />
                <div className="flex w-[13px] items-center justify-center border border-[#ababab] bg-white">
                    <Svg w={4} h={6} stroke="none"><path d="M0 0v6l4-3z" fill="#555" /></Svg>
                </div>
            </div>
        </div>
    );
}

function StatusBar() {
    return (
        <div className="flex h-[17px] shrink-0 items-center border-t border-[#d2d2d2] bg-[#f3f2f1] text-[8.600px] tracking-[-0.270px] whitespace-nowrap text-[#555]">
            <div className="w-[646px] pt-px pl-[6px]">Ready</div>
            <div className="w-[81px] pt-px pl-[6px]">Average: (11,423.3)</div>
            <div className="w-[43px] pt-px pl-[6px]">Count: 2</div>
            <div className="w-[76px] pt-px pl-[6px]">Sum: (22,846.6)</div>
            <div className="flex h-full w-[31px] items-center justify-center bg-[#c8c6c4]">
                <Svg w={11} h={11}>
                    <path d="M.5 .5h10v10H.5zM.5 3.500h10M.5 7h10M3.500 .5v10M7 .5v10" />
                </Svg>
            </div>
            <Svg w={12} h={11} className="ml-[10px]">
                <path d="M.5 .5h11v10H.5zM3 2.500h6v6H3zM4.500 4.500h3M4.500 6.500h3" />
            </Svg>
            <Svg w={12} h={11} className="ml-[20px]">
                <path d="M.5 .5h11v10H.5zM4.500 .5v5h3v-5M.5 5.500h11" />
            </Svg>
            <Svg w={6} h={7} className="ml-[14px]" stroke="#999"><path d="M0 3.500h6" /></Svg>
            <div className="ml-[5px] flex h-[9px] w-[79px] items-center">
                <div className="h-px w-[37px] bg-[#aaa]" />
                <div className="h-[9px] w-[4px] bg-[#666]" />
                <div className="h-px flex-1 bg-[#aaa]" />
            </div>
            <Svg w={6} h={7} className="ml-[4px]" stroke="#888"><path d="M0 3.500h6M3 .5v6" /></Svg>
            <div className="ml-[9px] pt-px">100%</div>
        </div>
    );
}

/* ---------- taskbar ---------- */

function AppButton({ active, className, children }) {
    return (
        <div
            className={clsx(
                "flex h-full shrink-0 items-center justify-center border-b-2 border-[#c8982b]",
                active && "bg-[#fbf3ec]",
                className
            )}
        >
            {children}
        </div>
    );
}

function Taskbar() {
    return (
        <div className="flex h-[32px] shrink-0 items-center bg-linear-to-r from-[#f2dcc6] via-[#eedfd6] to-[#f4e6dc] text-[#333]">
            <Svg w={13} h={13} className="ml-[12px]" stroke="none">
                <path d="M0 1.800L6 1v5.200H0zM6.800 .9L13 0v6.200H6.800zM0 7h6v5.200l-6-.8zM6.800 7H13v6l-6.200-.9z" fill="#111" />
            </Svg>
            <div className="ml-[14px] flex h-[31px] w-[270px] items-center bg-white pl-[8px] text-[11.900px] tracking-[-0.400px] text-[#444]">
                <Svg w={14} h={14} stroke="#222">
                    <circle cx="8.700" cy="5" r="4.300" />
                    <path d="M5.700 8.200L.7 13" />
                </Svg>
                <span className="ml-[8px] pt-[2px]">Type here to search</span>
            </div>
            <Svg w={13} h={13} className="ml-[13px]" stroke="#111">
                <circle cx="6.500" cy="6.500" r="5.200" strokeWidth="1.700" />
            </Svg>
            <Svg w={14} h={12} className="ml-[25px]" stroke="#222">
                <path d="M.5 0v1.500h8V0M.5 3.500h8v5h-8zM.5 12v-1.500h8V12M11.500 0v12M10 4h3" />
            </Svg>
            <AppButton className="ml-[17px] w-[31px]">
                <Svg w={17} h={15} stroke="none">
                    <path d="M0 1h6l1.500 2H16v11H0z" fill="#e9b93a" />
                    <path d="M0 4.500h16V14H0z" fill="#fbd668" />
                    <path d="M3 7.500h11V15h-3v-3.500H6V15H3z" fill="#3b8fd0" />
                </Svg>
            </AppButton>
            <AppButton className="ml-[8px] w-[31px]">
                <Svg w={18} h={18} className="mr-[2px]" stroke="none">
                    <circle cx="9" cy="9" r="8.700" fill="#f7c93b" />
                    <path d="M1.500 4.700A8.700 8.700 0 0 1 16.600 4.800H9A4.200 4.200 0 0 0 5.300 11z" fill="#dd4b3e" />
                    <path d="M1.500 4.700A8.700 8.700 0 0 0 8 17.700L12 11.500 5.300 11z" fill="#27a056" />
                    <circle cx="9" cy="9" r="4.200" fill="#fff" />
                    <circle cx="9" cy="9" r="3.300" fill="#3d7fe6" />
                </Svg>
            </AppButton>
            <AppButton active className="ml-[4px] w-[36px]">
                <div className="relative flex">
                    <Svg w={19} h={17} className="ml-px" stroke="none">
                        <path d="M4 0h15v17H4z" fill="#21a366" />
                        <path d="M4 0h7.500v6H4z" fill="#2b9a5e" />
                        <path d="M11.500 0H19v6h-7.500z" fill="#38c481" />
                        <path d="M4 6h7.500v5.500H4z" fill="#17713f" />
                        <path d="M4 11.500h15V17H4z" fill="#185c37" />
                        <path d="M0 3.500h10v10H0z" fill="#107c41" />
                    </Svg>
                    <span className="absolute top-[3px] left-[3px] text-[8px] leading-[11px] font-bold text-white">X</span>
                </div>
            </AppButton>
            <AppButton className="ml-[6px] w-[31px]">
                <Svg w={18} h={18} stroke="none">
                    <rect x=".5" y=".5" width="17" height="17" rx="4.500" fill="#4a8cff" />
                    <path d="M3.500 6h6a1.500 1.500 0 0 1 1.500 1.500V12H5a1.500 1.500 0 0 1-1.500-1.500zM11.800 8L14.500 6v6l-2.700-2z" fill="#fff" />
                </Svg>
            </AppButton>
            <AppButton className="ml-[8px] w-[31px]">
                <Svg w={17} h={17} stroke="#fff">
                    <rect width="17" height="17" rx="2.500" fill="#b30b00" stroke="none" />
                    <path d="M3.500 12.500c2-.5 5-4.500 5-8.500 0-1.500-1-1.500-1 0 0 3 3 6.500 5.500 6.500 1.500 0 1-1.300-1-1-3 .2-6 1-8 2.500z" strokeWidth="1.200" />
                </Svg>
            </AppButton>
            <AppButton className="ml-[7px] w-[31px]">
                <div className="relative flex">
                    <Svg w={19} h={17} stroke="none">
                        <circle cx="10.500" cy="8.500" r="8.400" fill="#ed6c47" />
                        <path d="M10.500 .1a8.400 8.400 0 0 1 8.400 8.400h-8.400z" fill="#ff8f6b" />
                        <path d="M2.100 8.500h16.800a8.400 8.400 0 0 1-16.800 0z" fill="#d35230" />
                        <path d="M0 3.500h10v10H0z" fill="#b7391a" />
                    </Svg>
                    <span className="absolute top-[3px] left-[3px] text-[8px] leading-[11px] font-bold text-white">P</span>
                </div>
            </AppButton>
            <div className="flex flex-1 items-center">
                <Svg w={11} h={7} className="ml-[219px]" stroke="#222"><path d="M.7 6.300l4.800-5 4.800 5" /></Svg>
                <Svg w={10} h={13} className="ml-[16px]" stroke="#222">
                    <path d="M1.500 2.500h6v6h-6zM8 4h1.500v3H8M3 .5h3M3 11.500h4M4.500 9v2" />
                </Svg>
                <Svg w={13} h={8} className="ml-[13px]" stroke="#222">
                    <path d="M.5 .5h10v6H.5zM11.500 2.500v2" />
                    <path d="M2 2h5v3.500H2z" fill="#222" stroke="none" />
                </Svg>
                <Svg w={11} h={11} className="ml-[14px]" stroke="#222">
                    <path d="M1 10.500C1 5 5 1 10.500 1M3.500 10.500c0-4 3-7 7-7M6 10.500C6 8 8 6 10.500 6" />
                    <circle cx="9.500" cy="9.500" r=".8" fill="#222" />
                </Svg>
                <Svg w={14} h={11} className="ml-[12px]" stroke="#222">
                    <path d="M.5 3.500h2l3-3v10l-3-3h-2zM7.500 3.500q1.500 2 0 4M9.500 2.500q2.500 3 0 6" />
                    <path d="M11.500 1q3.500 4.500 0 9" stroke="#999" />
                </Svg>
                <Svg w={13} h={12} className="ml-[15px]" stroke="#222">
                    <path d="M4 8.500L9.500 1.500q2-1.500 2.500 1L6.500 9.500zM5.500 6q-4-.5-5 2.500 0 2.500 2.500 2.500 3 0 2-3M8 8.500q1.500-2 2.500-.5t2-.5" />
                </Svg>
                <div className="ml-[13px] flex w-[44px] flex-col items-center pt-[2px] text-[9.700px] leading-[14.500px] tracking-[-0.100px] whitespace-nowrap">
                    <span>8:18 AM</span>
                    <span>2/1/2021</span>
                </div>
                <Svg w={19} h={19} className="mt-[1px] ml-[17px]">
                    <path d="M.5 .5h12v9.500H6l-2 2.500V10H.500z" fill="#111" stroke="#111" />
                    <path d="M2.500 3h8M2.500 5.500h8M2.500 8h5" stroke="#eee" />
                    <circle cx="12" cy="12" r="6" fill="#cfc9c5" stroke="#777" />
                    <text x="12" y="15.200" textAnchor="middle" fontSize="9" fill="#222" stroke="none">1</text>
                </Svg>
            </div>
        </div>
    );
}

export default function App() {
    return (
        <div className="flex h-[720px] w-[1280px] justify-center overflow-hidden bg-black font-['Noto_Sans',sans-serif]">
            <div className="flex w-[1080px] flex-col overflow-hidden bg-[#f3f2f1]">
                <TitleBar />
                <TabStrip />
                <Ribbon />
                <FormulaBar />
                <div className="flex h-[464px] shrink-0">
                    <Sheet />
                    <VerticalScroll />
                </div>
                <SheetTabs />
                <StatusBar />
                <Taskbar />
            </div>
        </div>
    );
}
